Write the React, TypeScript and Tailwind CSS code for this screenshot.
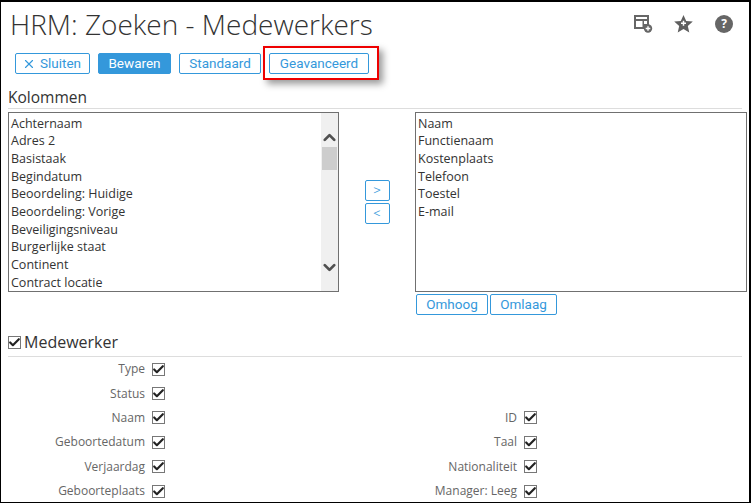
import { X, ChevronUp, ChevronDown, Check } from "lucide-react";

const leftItems = [
  "Achternaam",
  "Adres 2",
  "Basistaak",
  "Begindatum",
  "Beoordeling: Huidige",
  "Beoordeling: Vorige",
  "Beveiligingsniveau",
  "Burgerlijke staat",
  "Continent",
  "Contract locatie",
];
const rightItems = ["Naam", "Functienaam", "Kostenplaats", "Telefoon", "Toestel", "E-mail"];

const leftFields = ["Type", "Status", "Naam", "Geboortedatum", "Verjaardag", "Geboorteplaats"];
const rightFields = ["", "", "ID", "Taal", "Nationaliteit", "Manager: Leeg"];

const btn =
  "h-[21px] rounded-[2px] border border-[#3498db] bg-white text-[13.5px] leading-none text-[#3498db] font-['Roboto',sans-serif] flex items-center justify-center";

const Tick = () => (
  <span className="w-[13px] h-[13px] border border-[#777] bg-white flex items-center justify-center overflow-visible">
    <Check className="w-[13px] h-[13px] shrink-0 text-[#222]" strokeWidth={4} />
  </span>
);

const Field = ({ label }: { label: string }) => (
  <div className="h-[24.4px] flex items-center justify-end">
    {label && (
      <>
        <span className="text-[12px] text-[#666] whitespace-nowrap">{label}</span>
        <span className="ml-[7px]">
          <Tick />
        </span>
      </>
    )}
  </div>
);

export default function App() {
  return (
    <div className="relative w-[751px] h-[503px] overflow-hidden bg-white border-l border-b border-r-2 border-t-2 border-black font-['Open_Sans',sans-serif] text-[#333]">
      <div className="flex items-start justify-between h-[44px]">
        <h1 className="ml-[9px] mt-[3px] text-[28px] leading-[38px] font-light text-[#333]">
          HRM: Zoeken - Medewerkers
        </h1>
        <div className="flex items-center mt-[12px] mr-[16px]">
          <svg width="20" height="20" viewBox="0 0 20 20">
            <path d="M1 1h15v10.5h-1.5a5 5 0 0 0-3.5 3.5H1z" fill="#666" />
            <rect x="3" y="3" width="11" height="2" fill="#fff" />
            <rect x="3" y="7" width="6.5" height="6" fill="#fff" />
            <rect x="11" y="7" width="3" height="3" fill="#fff" />
            <circle cx="15" cy="14.5" r="4.2" fill="#666" />
            <path d="M15 12.2v4.6M12.7 14.5h4.6" stroke="#fff" strokeWidth="1.4" />
          </svg>
          <svg className="ml-[21px]" width="19" height="18" viewBox="0 0 19 18">
            <path d="M9.5 0l2.7 6 6.6.6-5 4.4 1.5 6.5-5.8-3.4-5.8 3.4 1.5-6.5-5-4.4 6.6-.6z" fill="#5f5f5f" />
            <path d="M9.5 5.8v5M7 8.3h5" stroke="#fff" strokeWidth="1.5" />
          </svg>
          <span className="ml-[22px] w-[18px] h-[18px] rounded-full bg-[#666] text-white text-[12px] font-bold flex items-center justify-center leading-none">
            ?
          </span>
        </div>
      </div>

      <div className="flex items-center ml-[14px] mt-[7px] h-[21px]">
        <button className={`${btn} w-[75px] gap-[4px] pr-[2px]`}>
          <X className="w-[14px] h-[14px]" strokeWidth={2} />
          Sluiten
        </button>
        <button className={`${btn} w-[73px] ml-[8px] !bg-[#3498db] !text-white`}>Bewaren</button>
        <button className={`${btn} w-[82px] ml-[8px]`}>Standaard</button>
        <button className={`${btn} w-[100px] ml-[8px]`}>Geavanceerd</button>
      </div>

      <div className="mx-[7px] mt-[12px] h-[23px] border-b border-[#ddd] text-[15.5px] leading-[22px]">Kolommen</div>

      <div className="flex items-start ml-[7px] mt-[3px]">
        <div className="w-[331px] h-[180px] border border-[#707070] flex overflow-hidden">
          <div className="flex-1 pl-[2px] pt-[1.5px] text-[12.5px] leading-[17.7px] text-[#333]">
            {leftItems.map((item) => (
              <div key={item} className="whitespace-nowrap">{item}</div>
            ))}
          </div>
          <div className="w-[17px] bg-[#f0f0f0] flex flex-col items-center pt-[18px] pb-[17px] justify-between relative">
            <ChevronUp className="w-[19px] h-[19px] -my-[3px] text-[#505050]" strokeWidth={3.5} />
            <div className="absolute top-[34px] left-[1px] w-[15px] h-[23px] bg-[#cdcdcd]" />
            <ChevronDown className="w-[19px] h-[19px] -my-[3px] text-[#505050]" strokeWidth={3.5} />
          </div>
        </div>

        <div className="w-[76px] flex flex-col items-center pt-[68px] gap-[2px]">
          <button className={`${btn} w-[25px] h-[21px] !text-[15px] font-light`}>&gt;</button>
          <button className={`${btn} w-[25px] h-[21px] !text-[15px] font-light`}>&lt;</button>
        </div>

        <div>
          <div className="w-[332px] h-[180px] border border-[#707070] pl-[2px] pt-[1.5px] text-[12.5px] leading-[17.7px]">
            {rightItems.map((item) => (
              <div key={item}>{item}</div>
            ))}
          </div>
          <div className="flex gap-[2px] ml-[1px] mt-[2px]">
            <button className={`${btn} w-[72px]`}>Omhoog</button>
            <button className={`${btn} w-[67px]`}>Omlaag</button>
          </div>
        </div>
      </div>

      <div className="mx-[7px] mt-[16px] h-[26px] border-b border-[#ddd] flex items-center gap-[3px] pb-[3px] text-[16px]">
        <Tick />
        <span>Medewerker</span>
      </div>

      <div className="flex">
        <div className="w-[458px]">
          <div className="w-[164px]">
            {leftFields.map((f) => (
              <Field key={f} label={f} />
            ))}
          </div>
        </div>
        <div className="w-[78px]">
          {rightFields.map((f, i) => (
            <Field key={i} label={f} />
          ))}
        </div>
      </div>

      {/* rode markering over de knop */}
      <div className="absolute left-[262px] top-[44px] w-[116px] h-[34px] border-2 border-[#ee0000] shadow-[4px_4px_7px_rgba(0,0,0,0.4)]" />
    </div>
  );
}
